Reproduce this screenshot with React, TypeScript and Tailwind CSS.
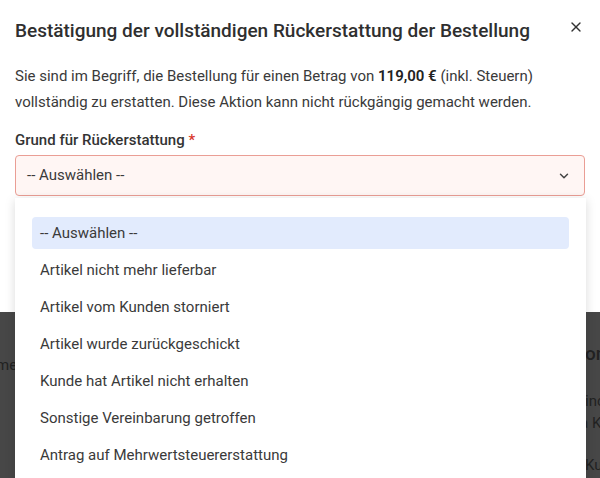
import { ChevronDown, X } from "lucide-react";

const reasons = [
  "-- Auswählen --",
  "Artikel nicht mehr lieferbar",
  "Artikel vom Kunden storniert",
  "Artikel wurde zurückgeschickt",
  "Kunde hat Artikel nicht erhalten",
  "Sonstige Vereinbarung getroffen",
  "Antrag auf Mehrwertsteuererstattung",
];

export default function App() {
  return (
    <div
      className="relative h-[478px] w-[600px] overflow-hidden bg-[#474747] text-[#333]"
      style={{ fontFamily: 'Roboto, "Noto Sans", sans-serif' }}
    >
      {/* modal */}
      <div className="h-[312px] bg-white px-[15px] pt-[17px]">
        <div className="flex items-start justify-between">
          <h2 className="text-[19px] leading-[28px] font-medium whitespace-nowrap text-[#2f2f2f]">
            Bestätigung der vollständigen Rückerstattung der Bestellung
          </h2>
          <button className="mt-[2px] mr-[1px] text-[#333]">
            <X size={16} strokeWidth={2} />
          </button>
        </div>
        <p className="mt-[18px] text-[15px] leading-[26px] text-[#3a3a3a]">
          Sie sind im Begriff, die Bestellung für einen Betrag von{" "}
          <span className="font-semibold text-[#222]">119,00 €</span> (inkl. Steuern)
          <br />
          vollständig zu erstatten. Diese Aktion kann nicht rückgängig gemacht werden.
        </p>
        <label className="mt-[13px] block text-[15px] leading-[24px] font-medium text-[#333]">
          Grund für Rückerstattung <span className="text-[#d9362b]">*</span>
        </label>
        <div className="mt-[3px] flex h-[41px] items-center justify-between rounded-[4px] border border-[#ea9e95] bg-[#fff6f4] pr-[13px] pl-[11px] text-[15px] text-[#3a3a3a]">
          <span>-- Auswählen --</span>
          <ChevronDown size={14} strokeWidth={2.5} className="text-[#444]" />
        </div>
      </div>

      {/* page content behind the backdrop */}
      <div className="flex justify-between text-[#222]">
        <div className="-ml-[4px] pt-[42px] text-[15px]">me</div>
        <div className="-mr-[30px] w-[45px] pt-[29px]">
          <div className="text-[19px] leading-[26px] font-medium">on</div>
          <div className="mt-[23px] text-[15px] leading-[22px]">inc</div>
          <div className="-ml-[5px] text-[15px] leading-[22px]">a K</div>
          <div className="mt-[20px] text-[15px] leading-[22px]">Ku</div>
        </div>
      </div>

      {/* open dropdown */}
      <ul className="absolute top-[198px] left-[15px] w-[571px] bg-white px-[17px] pt-[19px] pb-[20px] shadow-[0_2px_10px_rgba(0,0,0,0.15)]">
        {reasons.map((r, i) => (
          <li
            key={r}
            className={
              "flex h-[32px] items-center rounded-[4px] px-[8px] text-[15px] text-[#3a3a3a] " +
              (i === 0 ? "bg-[#e2ebfd]" : "") +
              (i > 0 ? " mt-[5px]" : "")
            }
          >
            {r}
          </li>
        ))}
      </ul>
    </div>
  );
}
